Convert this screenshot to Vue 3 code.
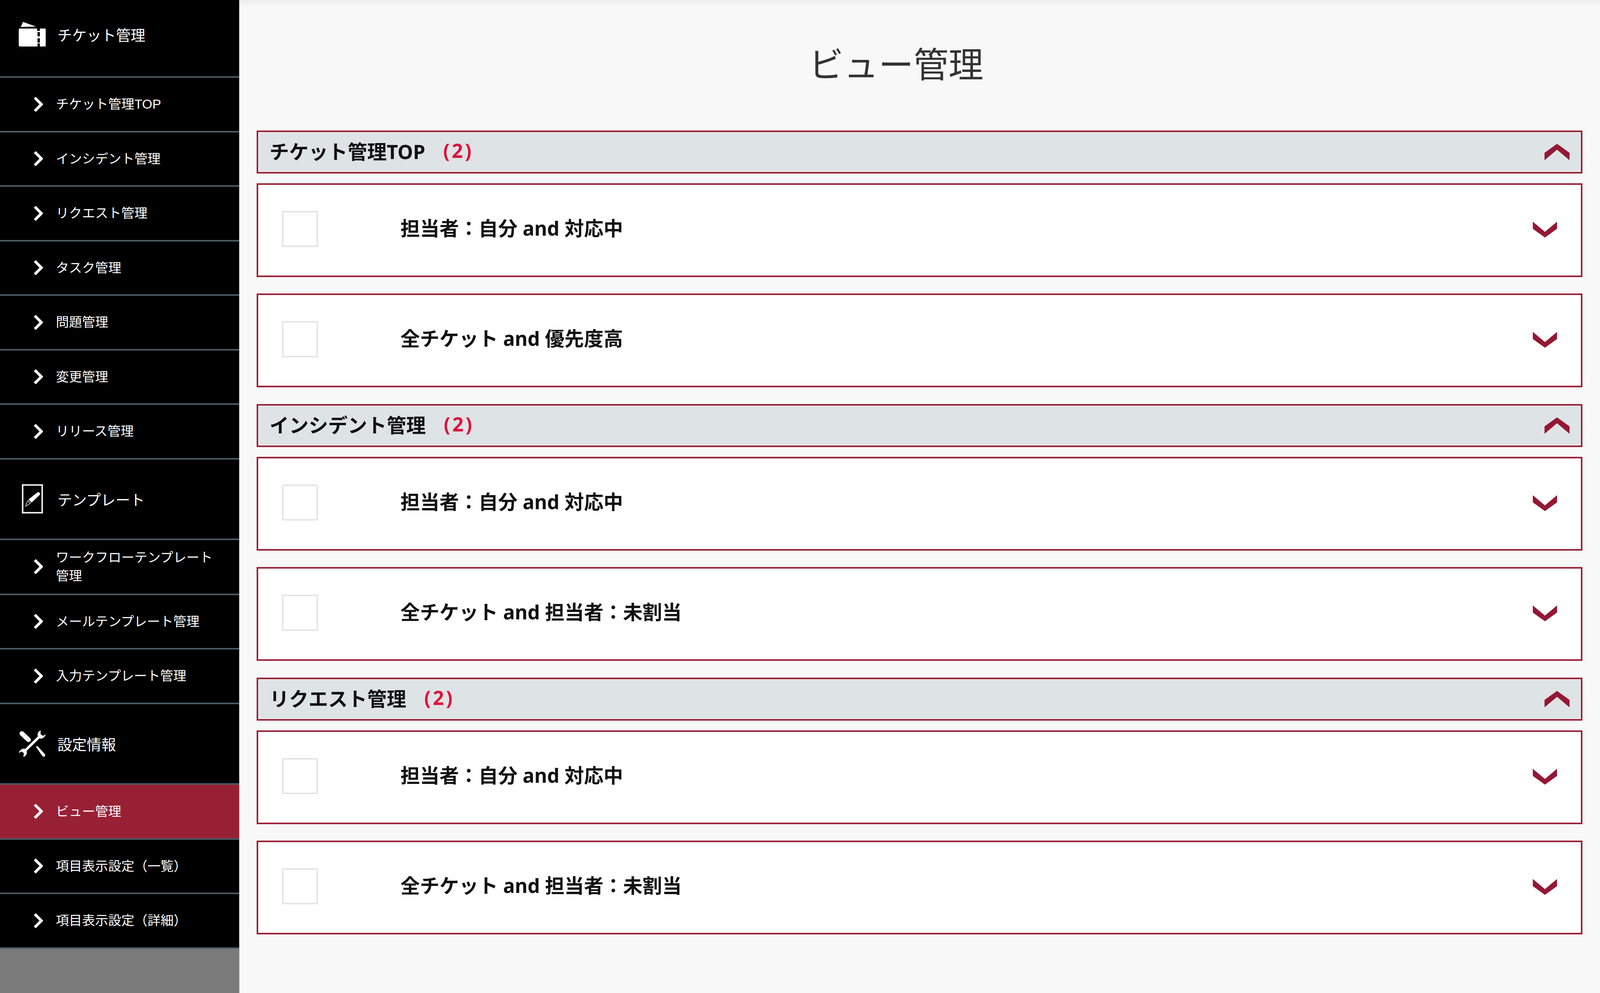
<script setup>
const sections = [
  {
    title: 'チケット管理',
    icon: 'ticket',
    items: [
      { label: 'チケット管理TOP' },
      { label: 'インシデント管理' },
      { label: 'リクエスト管理' },
      { label: 'タスク管理' },
      { label: '問題管理' },
      { label: '変更管理' },
      { label: 'リリース管理' },
    ],
  },
  {
    title: 'テンプレート',
    icon: 'template',
    items: [
      { label: 'ワークフローテンプレート管理', wrap: true },
      { label: 'メールテンプレート管理' },
      { label: '入力テンプレート管理' },
    ],
  },
  {
    title: '設定情報',
    icon: 'tools',
    items: [
      { label: 'ビュー管理', active: true, wrap: true },
      { label: '項目表示設定（一覧）' },
      { label: '項目表示設定（詳細）' },
    ],
  },
]

const groups = [
  { title: 'チケット管理TOP', views: ['担当者：自分 and 対応中', '全チケット and 優先度高'] },
  { title: 'インシデント管理', views: ['担当者：自分 and 対応中', '全チケット and 担当者：未割当'] },
  { title: 'リクエスト管理', views: ['担当者：自分 and 対応中', '全チケット and 担当者：未割当'] },
]
</script>

<template>
  <div class="page">
    <aside class="side">
      <template v-for="(s, si) in sections" :key="s.title">
        <div class="side-head" :class="{ first: si === 0 }">
          <span class="head-icon">
            <svg v-if="s.icon === 'ticket'" width="70" height="64" viewBox="0 0 70 64">
              <path d="M5 13 L11 0 L44 12 Z" fill="#fff" />
              <path fill-rule="evenodd" fill="#fff" d="M3 17 H47 V23 H54 V17 H67 Q69 17 69 19 V61 Q69 63 67 63 H54 V55 H48 V63 H3 Q0 63 0 60 V20 Q0 17 3 17 Z M48 26 H54 V37 H48 Z M48 42 H54 V53 H48 Z" />
            </svg>
            <svg v-else-if="s.icon === 'template'" width="54" height="75" viewBox="0 0 54 75">
              <rect x="2" y="2" width="50" height="71" fill="none" stroke="#e6e6e6" stroke-width="4" />
              <path d="M40 21 Q44 19 46 23 Q47 26 45 28 L25 47 L17 39 Z" fill="#fff" />
              <path d="M16 42 L22 48 L17 52 L10 56 L12 48 Z" fill="none" stroke="#bdbdbd" stroke-width="2" />
            </svg>
            <svg v-else width="70" height="70" viewBox="0 0 70 70">
              <path d="M8 9 L25 25" stroke="#fff" stroke-width="12" stroke-linecap="round" fill="none" />
              <path d="M44 43 L48 41 L67 62 Q69 66 66 68 Q62 69 60 66 Z" fill="#fff" />
              <path d="M15 54 L54 16" stroke="#fff" stroke-width="6.5" fill="none" />
              <path d="M56 1 Q46 5 49 17 Q52 23 59 22 Q67 19 69 11 L62 15 L56 11 Z" fill="#fff" />
              <path d="M12 69 Q23 65 20 53 Q17 47 10 48 Q2 51 0 59 L7 55 L13 59 Z" fill="#fff" />
            </svg>
          </span>
          <span class="head-text">{{ s.title }}</span>
        </div>
        <a
          v-for="it in s.items"
          :key="it.label"
          class="side-item"
          :class="{ active: it.active, tall: it.wrap }"
        >
          <svg class="chev" width="24" height="38" viewBox="0 0 24 38">
            <path d="M3 2 L20 19 L3 36" fill="none" stroke="#fff" stroke-width="7" />
          </svg>
          <span class="item-text">{{ it.label }}</span>
        </a>
      </template>
      <div class="side-fill"></div>
    </aside>

    <main class="main">
      <h1 class="title">ビュー管理</h1>
      <section v-for="g in groups" :key="g.title" class="group">
        <div class="group-head">
          <span class="group-title">{{ g.title }}</span>
          <span class="count">(2)</span>
          <svg class="up" width="64" height="42" viewBox="0 0 64 42">
            <path d="M32 0 L64 23 V42 L32 15 L0 42 V23 Z" fill="#941834" />
          </svg>
        </div>
        <div v-for="(v, i) in g.views" :key="i" class="card">
          <span class="check"></span>
          <span class="view-name">{{ v }}</span>
          <svg class="down" width="62" height="41" viewBox="0 0 64 42">
            <path d="M32 42 L64 19 V0 L32 27 L0 0 V19 Z" fill="#941834" />
          </svg>
        </div>
      </section>
    </main>
  </div>
</template>

<style>
html, body {
  margin: 0;
  background: #f8f8f8;
}
</style>

<style scoped>
.page {
  display: flex;
  width: 100%;
  min-height: 100vh;
  background: #f8f8f8;
  font-family: "Noto Sans", "Noto Sans CJK JP", sans-serif;
}
.side {
  position: relative;
  width: 612px;
  flex: none;
  display: flex;
  flex-direction: column;
  background: #000;
  color: #fff;
  font-family: "Liberation Sans", "Noto Sans CJK JP", sans-serif;
  box-shadow: 1px 0 1px #aaa;
}
.side-head {
  box-sizing: border-box;
  height: 206px;
  flex: none;
  display: flex;
  align-items: center;
  border-bottom: 4px solid #4a5b63;
}
.side-head.first {
  height: 199px;
  padding-bottom: 20px;
}
.head-icon {
  box-sizing: border-box;
  width: 147px;
  flex: none;
  display: flex;
  justify-content: center;
  padding: 0 29px 0 47px;
}
.head-text {
  font-size: 37.5px;
}
.side-item {
  box-sizing: border-box;
  height: 139.5px;
  flex: none;
  display: flex;
  align-items: center;
  padding-left: 86px;
  padding-right: 40px;
  border-bottom: 4px solid #4a5b63;
  font-size: 33.5px;
  line-height: 47px;
}
.side-item.tall {
  height: 141px;
}
.side-item.active {
  background: #982035;
}
.chev {
  flex: none;
  margin-right: 33px;
}
.side-fill {
  flex: 1;
  background: #7c7b7c;
}
.main {
  flex: 1;
  min-width: 0;
  box-sizing: border-box;
  padding: 0 45px;
  background: linear-gradient(#ececec, #f8f8f8 16px);
}
.title {
  box-sizing: border-box;
  height: 334px;
  margin: 0;
  padding: 94px 120px 0 0;
  text-align: center;
  font-size: 89.5px;
  line-height: 130px;
  font-weight: 400;
  color: #333;
  font-family: "Noto Sans CJK JP", sans-serif;
}
.group {
  display: flex;
  flex-direction: column;
  height: 700px;
}
.group-head {
  box-sizing: border-box;
  height: 110px;
  flex: none;
  display: flex;
  align-items: center;
  padding: 0 29px;
  background: #dee3e5;
  border: 4px solid #9b2035;
  box-shadow: inset 0 0 0 2px #e8f2f4, 0 0 6px rgba(0, 0, 0, 0.05);
  font-size: 50px;
  font-weight: 700;
  color: #111;
}
.group-title {
  margin-top: -8px;
}
.count {
  margin-left: 46px;
  margin-top: -8px;
  color: #dc143c;
  letter-spacing: 5px;
}
.up {
  margin-left: auto;
}
.card {
  box-sizing: border-box;
  height: 240px;
  flex: none;
  display: flex;
  align-items: center;
  margin-top: 25px;
  margin-bottom: 17px;
  padding-left: 61px;
  padding-right: 61px;
  background: #fff;
  border: 4px solid #9b2035;
  box-shadow: 0 0 6px rgba(0, 0, 0, 0.05);
  font-size: 50px;
  font-weight: 700;
  color: #111;
}
.check {
  box-sizing: border-box;
  width: 92px;
  height: 92px;
  flex: none;
  margin-top: -6px;
  background: #fff;
  border: 3px solid #e2e2e2;
  box-shadow: inset 0 0 4px rgba(0, 0, 0, 0.08);
}
.view-name {
  margin-left: 211px;
  margin-top: -16px;
}
.down {
  margin-left: auto;
  margin-top: -3px;
}
</style>
